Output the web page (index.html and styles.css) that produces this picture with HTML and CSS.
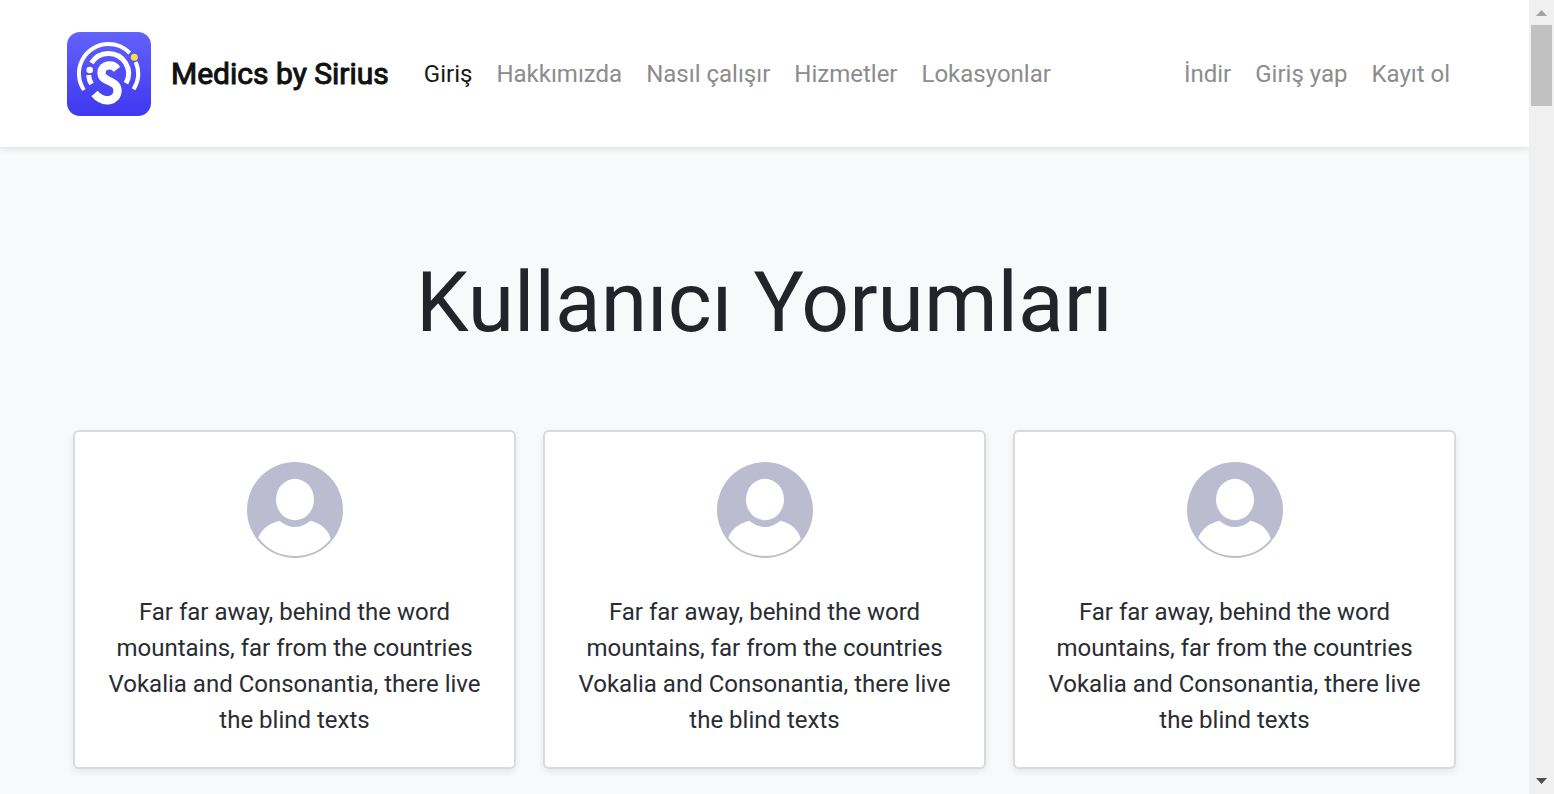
FILE: index.html
```html
<!DOCTYPE html>
<html lang="tr">
<head>
<meta charset="utf-8">
<meta name="viewport" content="width=device-width, initial-scale=1">
<title>Medics by Sirius</title>
<link rel="stylesheet" href="styles.css">
</head>
<body>
<svg class="sprite" aria-hidden="true">
  <symbol id="avatar" viewBox="0 0 96 96">
    <circle cx="48" cy="48" r="48" fill="#bbbcd0"/>
    <ellipse cx="48" cy="37.5" rx="19" ry="20.7" fill="#fff"/>
    <path d="M32.3 58.7Q48 71.3 63.5 58.7Q80 63 83.8 77Q70 94 48 94Q25 94 11.3 75.8Q16 63 32.3 58.7Z" fill="#fff"/>
  </symbol>
</svg>
<div class="page">
  <header class="navbar">
    <a class="brand" href="#">
      <svg class="logo" viewBox="0 0 84 84" aria-hidden="true">
        <defs><linearGradient id="logo-fill" x1="0" y1="0" x2="0" y2="1"><stop offset="0" stop-color="#6362fb"/><stop offset="1" stop-color="#3e38f0"/></linearGradient></defs>
        <rect width="84" height="84" rx="13" fill="url(#logo-fill)"/>
        <g fill="none" stroke="#fff">
          <path stroke-width="4" d="M17 58A29.5 29.5 0 0 1 41.5 12A29.5 29.5 0 0 1 62.8 21"/>
          <path stroke-width="4" d="M68.7 30A29.5 29.5 0 0 1 66.500 57.3"/>
          <path stroke-width="5" d="M24.500 31A20 20 0 0 1 41.500 21.500A20 20 0 0 1 59 51.200"/>
          <path stroke-width="5" d="M21.600 43A20 20 0 0 0 24.500 52"/>
          <path stroke-width="8.300" d="M50 37.300C45.500 31.500 34.500 32 34.500 41C34.500 50.500 50.500 47.500 50.500 58.500C50.500 69 37 72.500 27.500 61.500"/>
        </g>
        <circle cx="22.700" cy="38" r="3.300" fill="#fff"/>
        <circle cx="67.300" cy="25.300" r="3.500" fill="#f7e436"/>
      </svg>
      <span>Medics by Sirius</span>
    </a>
    <nav class="menu" aria-label="Ana menü">
      <a class="active" href="#">Giriş</a>
      <a href="#">Hakkımızda</a>
      <a href="#">Nasıl çalışır</a>
      <a href="#">Hizmetler</a>
      <a href="#">Lokasyonlar</a>
    </nav>
    <nav class="menu account" aria-label="Hesap">
      <a href="#">İndir</a>
      <a href="#">Giriş yap</a>
      <a href="#">Kayıt ol</a>
    </nav>
  </header>
  <main class="reviews">
    <h1>Kullanıcı Yorumları</h1>
    <div class="cards">
      <article class="card">
        <svg class="avatar" aria-hidden="true"><use href="#avatar"/></svg>
        <p>Far far away, behind the word mountains, far from the countries Vokalia and Consonantia, there live the blind texts</p>
      </article>
      <article class="card">
        <svg class="avatar" aria-hidden="true"><use href="#avatar"/></svg>
        <p>Far far away, behind the word mountains, far from the countries Vokalia and Consonantia, there live the blind texts</p>
      </article>
      <article class="card">
        <svg class="avatar" aria-hidden="true"><use href="#avatar"/></svg>
        <p>Far far away, behind the word mountains, far from the countries Vokalia and Consonantia, there live the blind texts</p>
      </article>
    </div>
  </main>
</div>
<div class="scrollbar" aria-hidden="true">
  <svg viewBox="0 0 25 25"><path d="M7 16L12.500 10L18 16Z" fill="#a3a3a3"/></svg>
  <div class="track"><div class="thumb"></div></div>
  <svg viewBox="0 0 25 25"><path d="M7 9L12.500 15L18 9Z" fill="#505050"/></svg>
</div>
</body>
</html>
```

FILE: styles.css
```css
* { box-sizing: border-box; }

body {
  margin: 0;
  display: flex;
  min-height: 100vh;
  background: #f8f9fb;
  color: #292c31;
  font: 24px/36px Roboto, sans-serif;
}

.sprite { position: absolute; width: 0; height: 0; }

.page { flex: 1; min-width: 0; }

.navbar {
  display: flex;
  align-items: center;
  padding: 32px 67px 31px;
  background: #fff;
  box-shadow: 0 2px 6px rgba(0, 0, 0, .1);
}

.brand {
  display: flex;
  align-items: center;
  gap: 20px;
  margin-right: 23px;
  color: #111;
  font-size: 30px;
  -webkit-text-stroke: 1px #111;
  text-decoration: none;
  white-space: nowrap;
}

.logo { display: block; width: 84px; height: 84px; }

.menu { display: flex; }

.menu a {
  padding: 12px;
  color: #8c8c8c;
  text-decoration: none;
  white-space: nowrap;
}

.menu .active { color: #1a1a1a; }

.account { margin-left: auto; }

.reviews { padding: 96px 73px 24px; }

h1 {
  margin: 0 0 69px;
  padding: 10px 0 8px;
  color: #212529;
  font-size: 84px;
  font-weight: 400;
  line-height: 100px;
  text-align: center;
}

.cards {
  display: grid;
  grid-template-columns: repeat(3, 1fr);
  gap: 27px;
}

.card {
  padding: 30px 28px 29px;
  border: 2px solid #d9dadb;
  border-radius: 6px;
  background: #fff;
  box-shadow: 0 3px 6px rgba(0, 0, 0, .075);
  text-align: center;
}

.avatar { display: block; width: 96px; height: 96px; margin: 0 auto 36px; }

.card p { margin: 0; }

.scrollbar {
  position: sticky;
  top: 0;
  display: flex;
  flex-direction: column;
  width: 25px;
  height: 100vh;
  background: #f0f0f0;
}

.scrollbar svg { display: block; width: 25px; height: 25px; }

.track { flex: 1; padding: 0 2px; }

.thumb { height: 81px; background: #c1c1c1; }
```
